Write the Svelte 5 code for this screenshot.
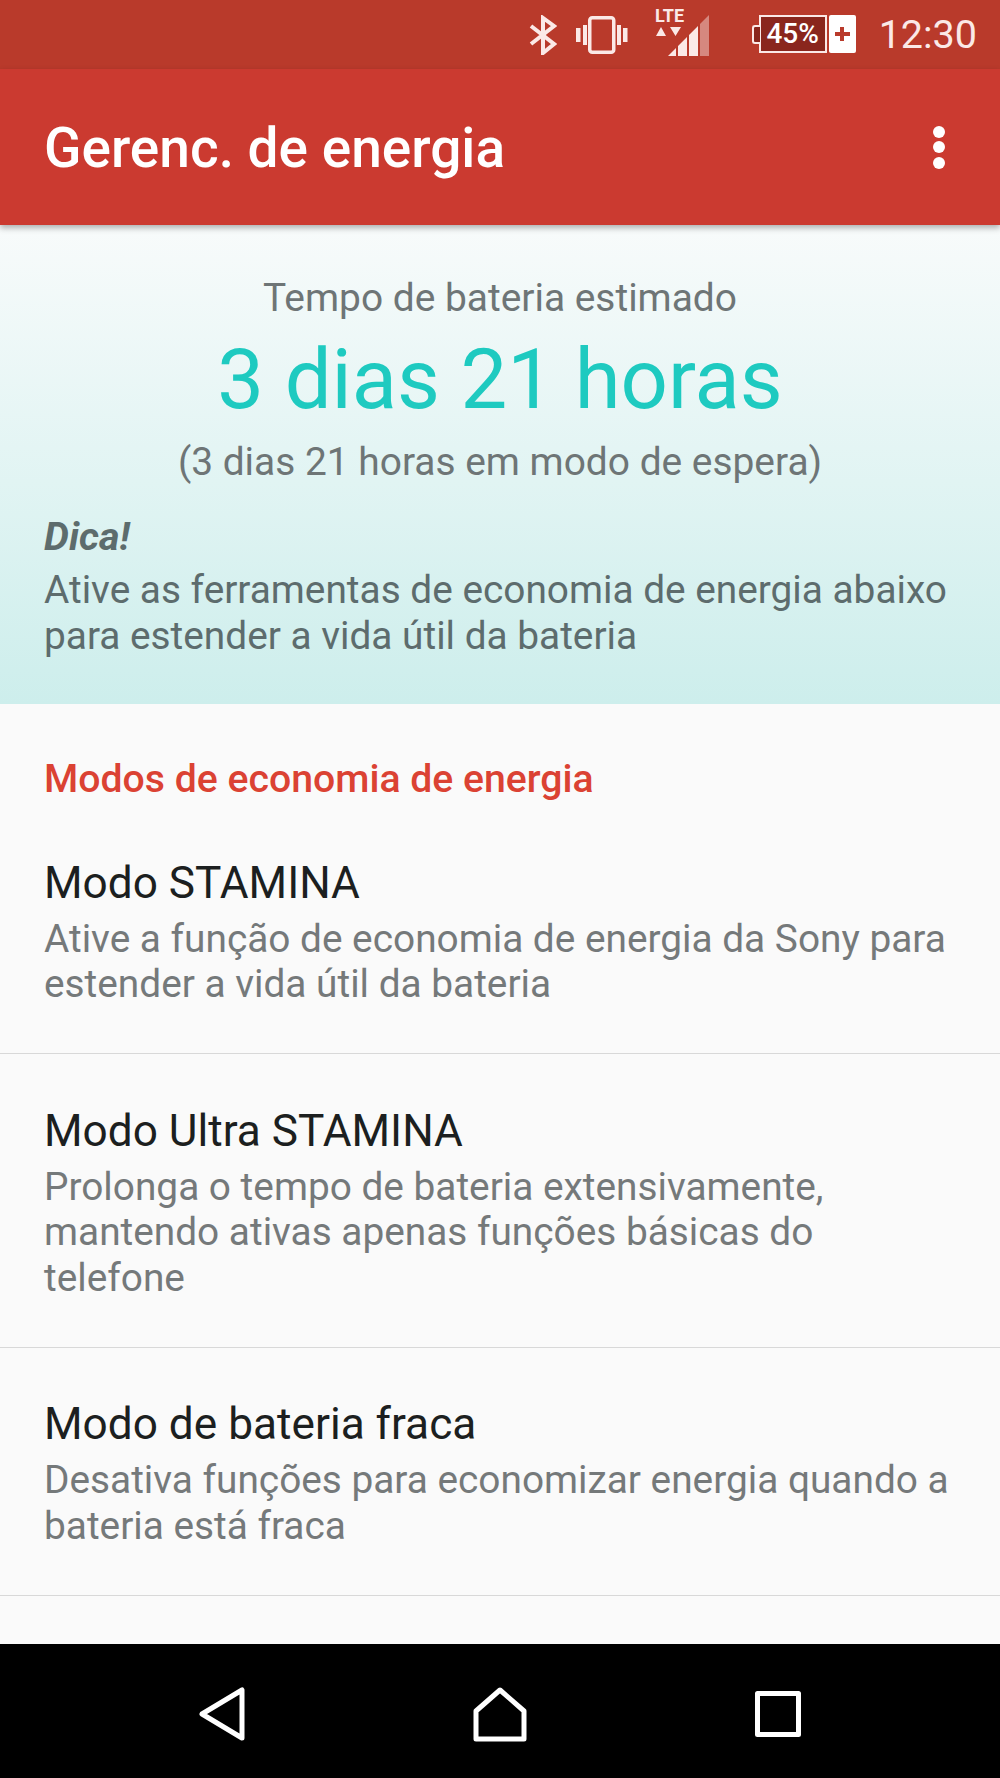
<script>
    const items = [
        {
            title: "Modo STAMINA",
            desc: ["Ative a função de economia de energia da Sony para", "estender a vida útil da bateria"],
        },
        {
            title: "Modo Ultra STAMINA",
            desc: ["Prolonga o tempo de bateria extensivamente,", "mantendo ativas apenas funções básicas do", "telefone"],
        },
        {
            title: "Modo de bateria fraca",
            desc: ["Desativa funções para economizar energia quando a", "bateria está fraca"],
        },
    ];
</script>

<div class="screen">
    <div class="statusbar">
        <svg class="bt" width="28" height="40" viewBox="0 0 28 40" fill="none" stroke="#fbe9e7" stroke-width="4">
            <path d="M2 11 L25 29 L14 38 V3 L25 11 L2 29" />
        </svg>
        <svg class="vib" width="52" height="38" viewBox="0 0 52 38" fill="#fbe9e7">
            <rect x="13.75" y="1.75" width="24" height="34.5" rx="2.5" fill="none" stroke="#fbe9e7" stroke-width="3.5" />
            <rect x="7" y="9" width="4" height="20" />
            <rect x="0" y="12" width="4.5" height="14" />
            <rect x="41" y="9" width="4" height="20" />
            <rect x="47" y="12" width="4.5" height="14" />
        </svg>
        <svg class="sig" width="60" height="54" viewBox="0 -4 60 54" fill="#fbe9e7">
            <text class="lte" x="3" y="14">LTE</text>
            <path d="M4 28 L9 19 L14 28 Z M18 19 H29 L23.5 28 Z" />
            <path d="M16 48 L24 40 V48 Z M26 38 L35 29 V48 H26 Z M37 27 L46 18 V48 H37 Z" />
            <path d="M48 16 L57 7 V48 H48 Z" opacity="0.45" />
        </svg>
        <div class="battery">
            <div class="cell"><span>45%</span></div>
            <div class="plus"></div>
        </div>
        <div class="time">12:30</div>
    </div>

    <div class="appbar">
        <div class="title">Gerenc. de energia</div>
        <div class="dots"><i></i><i></i><i></i></div>
    </div>

    <div class="content">
        <div class="hero">
            <div class="est">Tempo de bateria estimado</div>
            <div class="big">3 dias 21 horas</div>
            <div class="est sub">(3 dias 21 horas em modo de espera)</div>
            <div class="tip-head">Dica!</div>
            <div class="tip">
                <div>Ative as ferramentas de economia de energia abaixo</div>
                <div>para estender a vida útil da bateria</div>
            </div>
        </div>

        <div class="section">Modos de economia de energia</div>
        {#each items as item}
            <div class="item">
                <div class="item-title">{item.title}</div>
                {#each item.desc as line}
                    <div class="item-desc">{line}</div>
                {/each}
            </div>
        {/each}
    </div>

    <div class="navbar">
        <svg width="46" height="54" viewBox="0 0 46 54" fill="none" stroke="#fff" stroke-width="5" stroke-linejoin="round">
            <path d="M43 3 V51 L3 27 Z" />
        </svg>
        <svg width="54" height="55" viewBox="0 0 54 55" fill="none" stroke="#fff" stroke-width="5" stroke-linejoin="round">
            <path d="M27 3 L51 24 V52 H3 V24 Z" />
        </svg>
        <svg width="46" height="46" viewBox="0 0 46 46" fill="none" stroke="#fff" stroke-width="5" stroke-linejoin="round">
            <rect x="2.5" y="2.5" width="41" height="41" />
        </svg>
    </div>
</div>

<style>
    :global(body) {
        margin: 0;
    }

    .screen {
        width: 1000px;
        height: 1778px;
        display: flex;
        flex-direction: column;
        overflow: hidden;
        background: #fafafa;
        font-family: Roboto, sans-serif;
    }

    .statusbar {
        height: 69px;
        flex: none;
        background: #b93a2b;
        display: flex;
        align-items: center;
        padding-right: 23px;
        justify-content: flex-end;
        box-sizing: border-box;
    }

    .bt {
        margin-right: 19px;
    }

    .vib {
        margin-right: 24px;
    }

    .sig {
        margin-right: 47px;
        margin-bottom: 7px;
    }

    .lte {
        font-family: Roboto, sans-serif;
        font-size: 18px;
        font-weight: 700;
    }

    .battery {
        display: flex;
        gap: 2px;
        height: 38px;
        margin-right: 23px;
        margin-bottom: 2px;
    }

    .cell {
        width: 68px;
        box-sizing: border-box;
        background: #8a261d;
        border: 2px solid #fbe9e7;
        display: flex;
        align-items: center;
        justify-content: center;
        color: #fff;
        font-size: 28px;
        font-weight: 500;
        position: relative;
    }

    /* little cap on the left of the battery */
    .cell::before {
        content: "";
        position: absolute;
        left: -9px;
        top: 8px;
        width: 6px;
        height: 15px;
        background: #8a261d;
        border: 2px solid #fbe9e7;
        border-right: none;
        border-radius: 3px 0 0 3px;
    }

    .plus {
        width: 27px;
        background: #fff;
        border-radius: 2px;
        position: relative;
    }

    .plus::before,
    .plus::after {
        content: "";
        position: absolute;
        background: #b93a2b;
    }

    .plus::before {
        left: 6px;
        right: 6px;
        top: 17px;
        height: 4px;
    }

    .plus::after {
        top: 12px;
        bottom: 12px;
        left: 11.5px;
        width: 4px;
    }

    .time {
        color: #fbe9e7;
        font-size: 39.5px;
        line-height: 1;
    }

    .appbar {
        height: 156px;
        flex: none;
        background: #cb3a30;
        box-shadow: 0 3px 6px rgba(0, 0, 0, 0.3);
        display: flex;
        align-items: center;
        justify-content: space-between;
        padding: 0 55px 0 44px;
        box-sizing: border-box;
        position: relative;
    }

    .title {
        color: #fff;
        font-size: 55px;
        font-weight: 500;
        margin-top: 2px;
    }

    .dots {
        display: flex;
        flex-direction: column;
        gap: 3.5px;
    }

    .dots i {
        width: 12px;
        height: 12px;
        border-radius: 50%;
        background: #fff;
    }

    .content {
        flex: 1;
        min-height: 0;
        overflow: hidden;
    }

    .hero {
        height: 479px;
        box-sizing: border-box;
        padding: 46px 44px 0;
        background: linear-gradient(#f8fbfb, #cdeeec);
    }

    .est {
        text-align: center;
        color: #6e7576;
        font-size: 38.9px;
        line-height: 54px;
    }

    .big {
        text-align: center;
        color: #1ecac0;
        font-size: 83.2px;
        line-height: 100px;
        margin-top: 5px;
    }

    .sub {
        margin-top: 5px;
    }

    .tip-head {
        color: #5d6c6d;
        font-size: 39.5px;
        font-weight: 700;
        font-style: italic;
        line-height: 46px;
        margin-top: 25px;
    }

    .tip {
        color: #5d6c6d;
        font-size: 38.8px;
        line-height: 45.5px;
        margin-top: 7px;
    }

    .section {
        color: #db4233;
        font-size: 39.2px;
        font-weight: 500;
        line-height: 50px;
        padding: 50px 44px 2px;
    }

    .item {
        padding: 50.5px 44px 46.7px;
        border-bottom: 1px solid #d8d8d8;
    }

    .item-title {
        color: #1c1f20;
        font-size: 44.2px;
        line-height: 52px;
        margin-bottom: 7px;
    }

    .item-desc {
        color: #75797a;
        font-size: 38.8px;
        line-height: 45.5px;
        white-space: nowrap;
    }

    .navbar {
        height: 134px;
        flex: none;
        background: #000;
        box-sizing: border-box;
        padding-top: 6px;
        display: flex;
        align-items: center;
        justify-content: center;
        gap: 228px;
    }
</style>
